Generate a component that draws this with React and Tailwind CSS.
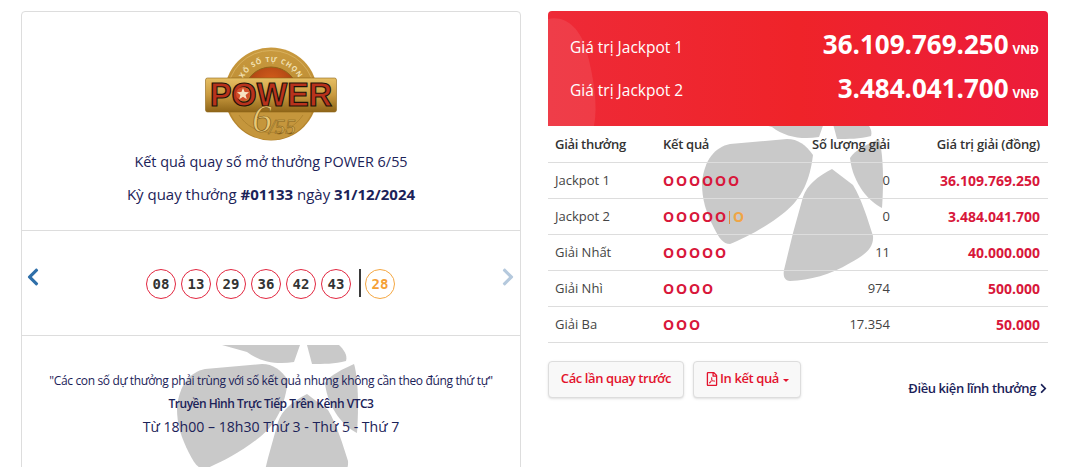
import { FaChevronLeft, FaChevronRight, FaRegFilePdf } from 'react-icons/fa';

const balls = ['08', '13', '29', '36', '42', '43'];

const prizes = [
    { name: 'Jackpot 1', red: 6, extra: false, count: '0', value: '36.109.769.250' },
    { name: 'Jackpot 2', red: 5, extra: true, count: '0', value: '3.484.041.700' },
    { name: 'Giải Nhất', red: 5, extra: false, count: '11', value: '40.000.000' },
    { name: 'Giải Nhì', red: 4, extra: false, count: '974', value: '500.000' },
    { name: 'Giải Ba', red: 3, extra: false, count: '17.354', value: '50.000' },
];

// faded brand mark behind the panels
const Watermark = ({ className }) => (
    <svg className={className} viewBox="0 0 200 170" fill="#c9c9c9">
        <path d="M57 0 L135 0 L129 17 C112 20 95 17 82 7 Z" />
        <path d="M142 0 L174 0 C178 4 183 10 181 16 C170 19 158 19 147 19 Z" />
        <path d="M12 63 C14 40 25 27 40 24 L97 19 C108 19 116 25 123 35 C120 60 112 78 95 92 C75 108 55 118 40 124 C33 124 29 118 24 108 C16 92 12 80 12 63 Z" />
        <path d="M142 49 L163 65 C172 80 178 100 183 116 C184 128 175 135 160 143 C140 155 120 160 100 161 C94 161 93 155 94 150 L103 113 L113 77 C117 65 128 56 142 49 Z" />
        <path d="M160 38 C165 30 178 24 189 19 C193 32 194 60 192 88 C180 82 163 65 160 38 Z" />
    </svg>
);

const Logo = () => (
    <svg width="132" height="94" viewBox="0 0 132 94">
        <defs>
            <linearGradient id="coin" x1="0" y1="0" x2="0" y2="1">
                <stop offset="0" stopColor="#c99a3f" />
                <stop offset="1" stopColor="#b07f28" />
            </linearGradient>
            <linearGradient id="bar" x1="0" y1="0" x2="0" y2="1">
                <stop offset="0" stopColor="#e6bf64" />
                <stop offset="0.5" stopColor="#c99a3f" />
                <stop offset="1" stopColor="#8f6518" />
            </linearGradient>
            <radialGradient id="inner" cx="0.5" cy="0.3" r="0.6">
                <stop offset="0" stopColor="#d9601c" />
                <stop offset="1" stopColor="#9a3a10" />
            </radialGradient>
            <path id="arc" d="M34 47 A32 32 0 0 1 98 47" />
        </defs>
        <circle cx="66" cy="47" r="46.5" fill="url(#coin)" />
        <circle cx="66" cy="47" r="43.5" fill="none" stroke="#e3c070" strokeWidth="0.6" />
        <circle cx="66" cy="47" r="27" fill="url(#inner)" stroke="#8f6518" />
        <path d="M24 62 A44 44 0 0 0 108 62 Z" fill="#c5963c" />
        <path d="M34 68 A38 38 0 0 0 98 68" fill="none" stroke="#a87c2a" strokeWidth="0.7" />
        <text fontSize="7" fontWeight="700" fill="#f3e2b4" fontFamily="'Open Sans', sans-serif" letterSpacing="0.9">
            <textPath href="#arc" startOffset="50%" textAnchor="middle">XỔ SỐ TỰ CHỌN</textPath>
        </text>
        <rect x="0.5" y="31" width="131" height="34" rx="2" fill="url(#bar)" stroke="#8f6518" strokeWidth="0.6" />
        <text x="66" y="59" textAnchor="middle" fontSize="33" fontWeight="700" fill="#b8321c" stroke="#1d1208" strokeWidth="1.2" textLength="122" lengthAdjust="spacingAndGlyphs" fontFamily="'Liberation Sans', sans-serif">POWER</text>
        <circle cx="38" cy="47" r="7" fill="#d3502a" />
        <polygon points="38,41 39.6,45 44,45.2 40.6,48 41.8,52.2 38,49.8 34.2,52.2 35.4,48 32,45.2 36.4,45" fill="#f7e3c2" />
        <text x="47" y="85" fontSize="40" fontStyle="italic" fill="#e9c877" stroke="#7f5a14" strokeWidth="0.7" fontFamily="'Liberation Serif', serif">6</text>
        <text x="64" y="87" fontSize="21" fontStyle="italic" fill="#d9b25c" stroke="#7f5a14" strokeWidth="0.5" fontFamily="'Liberation Serif', serif">/55</text>
    </svg>
);

const Ball = ({ value, special }) => (
    <span
        className={`w-[30px] h-[30px] rounded-full border flex items-center justify-center text-[14px] font-bold font-['DejaVu_Sans_Mono',monospace] ${special ? 'border-[#f5a742] text-[#f5a034]' : 'border-[#e2263f] text-[#333]'}`}
    >
        {value}
    </span>
);

const Dots = ({ red, extra }) => (
    <div className="flex items-center gap-[2px] text-[14px] font-bold text-[#d8173a] leading-none">
        {Array.from({ length: red }).map((_, i) => (
            <span key={i} className="w-[11px] text-center">O</span>
        ))}
        {extra && <span className="w-[1px] h-[13px] bg-[#e0863a] ml-[1px]" />}
        {extra && <span className="w-[11px] text-center text-[#f0a545] ml-[1px]">O</span>}
    </div>
);

export default function App() {
    return (
        <div className="h-[467px] overflow-hidden bg-white flex gap-[27px] pl-[21px] pt-[11px] font-['Open_Sans',sans-serif]">
            {/* Left panel */}
            <div className="w-[500px] h-[480px] shrink-0 border border-[#ddd] rounded-[4px] text-[#1b2258]">
                <div className="h-[219px] flex flex-col items-center pt-[35px] border-b border-[#ddd]">
                    <Logo />
                    <p className="mt-[11px] text-[14.4px] leading-[20px]">Kết quả quay số mở thưởng POWER 6/55</p>
                    <p className="mt-[12px] text-[15px] leading-[20px]">
                        Kỳ quay thưởng <b>#01133</b> ngày <b>31/12/2024</b>
                    </p>
                </div>

                <div className="h-[105px] flex items-center justify-between pl-[1px] pr-[2px] border-b border-[#ddd]">
                    <FaChevronLeft className="text-[#2f6fa9] text-[20px] -mt-[13px]" />
                    <div className="flex items-center gap-[5px] ml-[6px] mr-[6px] mt-[2px]">
                        {balls.map((b) => <Ball key={b} value={b} />)}
                        <span className="w-[2px] h-[28px] bg-[#3a3a3a] -mt-[2px] ml-[3px] -mr-[1px]" />
                        <Ball value="28" special />
                    </div>
                    <FaChevronRight className="text-[#b5c9dd] text-[20px] -mt-[13px]" />
                </div>

                <div className="relative h-[150px] pt-[35px] flex flex-col items-center">
                    <Watermark className="absolute left-[143px] top-[9px] w-[200px] h-[170px]" />
                    <p className="relative text-[12px] leading-[20px] tracking-[-0.35px]">"Các con số dự thưởng phải trùng với số kết quả nhưng không cần theo đúng thứ tự"</p>
                    <p className="relative mt-[3px] text-[12px] leading-[20px] font-semibold tracking-[-0.5px]">Truyền Hình Trực Tiếp Trên Kênh VTC3</p>
                    <p className="relative mt-[1px] text-[14.1px] leading-[24px]">Từ 18h00 – 18h30 Thứ 3 - Thứ 5 - Thứ 7</p>
                </div>
            </div>

            {/* Right panel */}
            <div className="relative w-[500px] shrink-0">
                <Watermark className="absolute left-[142px] top-[109px] w-[200px] h-[170px]" />

                <div className="relative overflow-hidden h-[115px] rounded-t-[4px] bg-gradient-to-r from-[#ee2a37] via-[#ef2329] to-[#ec1c3a] text-white pl-[22px] pr-[9px] pt-[14px]">
                    <svg className="absolute left-0 top-0 w-[60px] h-[115px]" viewBox="0 0 60 115" fill="#ffffff" fillOpacity="0.09">
                        <path d="M0 8 C18 4 32 18 38 38 C46 66 50 95 46 115 L0 115 Z" />
                    </svg>
                    <div className="relative flex items-center justify-between h-[44px]">
                        <span className="text-[15.5px] mt-[1px]">Giá trị Jackpot 1</span>
                        <span className="text-[26px] font-bold -mt-[5px]">36.109.769.250<span className="text-[12px] ml-[4px]">VNĐ</span></span>
                    </div>
                    <div className="relative flex items-center justify-between h-[44px]">
                        <span className="text-[15.5px]">Giá trị Jackpot 2</span>
                        <span className="text-[26px] font-bold -mt-[5px]">3.484.041.700<span className="text-[12px] ml-[4px]">VNĐ</span></span>
                    </div>
                </div>

                <table className="relative w-full table-fixed text-[13px] text-[#444]">
                    <thead>
                        <tr className="h-[36px] border-b border-[#ddd] text-[#333]">
                            <th className="w-[115px] pl-[7px] pt-[2px] text-left font-semibold tracking-[-0.3px]">Giải thưởng</th>
                            <th className="w-[112px] pt-[2px] text-left font-semibold tracking-[-0.3px]">Kết quả</th>
                            <th className="w-[115px] pt-[2px] text-right font-semibold tracking-[-0.2px]">Số lượng giải</th>
                            <th className="pr-[8px] pt-[2px] text-right font-semibold tracking-[-0.2px]">Giá trị giải (đồng)</th>
                        </tr>
                    </thead>
                    <tbody>
                        {prizes.map((p) => (
                            <tr key={p.name} className="h-[36px] border-b border-[#ddd]">
                                <td className="pl-[7px] pt-[2px]">{p.name}</td>
                                <td className="pt-[2px]"><Dots red={p.red} extra={p.extra} /></td>
                                <td className="pt-[2px] text-right">{p.count}</td>
                                <td className="pr-[8px] text-right text-[14px] font-bold text-[#d8173a]">{p.value}</td>
                            </tr>
                        ))}
                    </tbody>
                </table>

                <div className="relative flex items-start mt-[18px]">
                    <button className="w-[136px] h-[37px] rounded-[4px] border border-[#ddd] bg-[#f8f8f8] shadow-sm text-[13px] font-semibold tracking-[-0.4px] text-[#e3132d]">
                        Các lần quay trước
                    </button>
                    <button className="ml-[9px] w-[108px] h-[37px] rounded-[4px] border border-[#ddd] bg-[#f8f8f8] shadow-sm text-[13px] font-semibold tracking-[-0.4px] text-[#e3132d] flex items-center justify-center">
                        <FaRegFilePdf className="text-[14px] mr-[1px]" />
                        In kết quả
                        <span className="ml-[4px] mt-[2px] border-x-[3px] border-x-transparent border-t-[3px] border-t-[#e3132d]" />
                    </button>
                    <a className="ml-auto -mr-[1px] mt-[18px] flex items-center text-[13px] font-semibold tracking-[-0.4px] text-[#1b2258]">
                        Điều kiện lĩnh thưởng
                        <FaChevronRight className="text-[11px] ml-[2px]" />
                    </a>
                </div>
            </div>
        </div>
    );
}
